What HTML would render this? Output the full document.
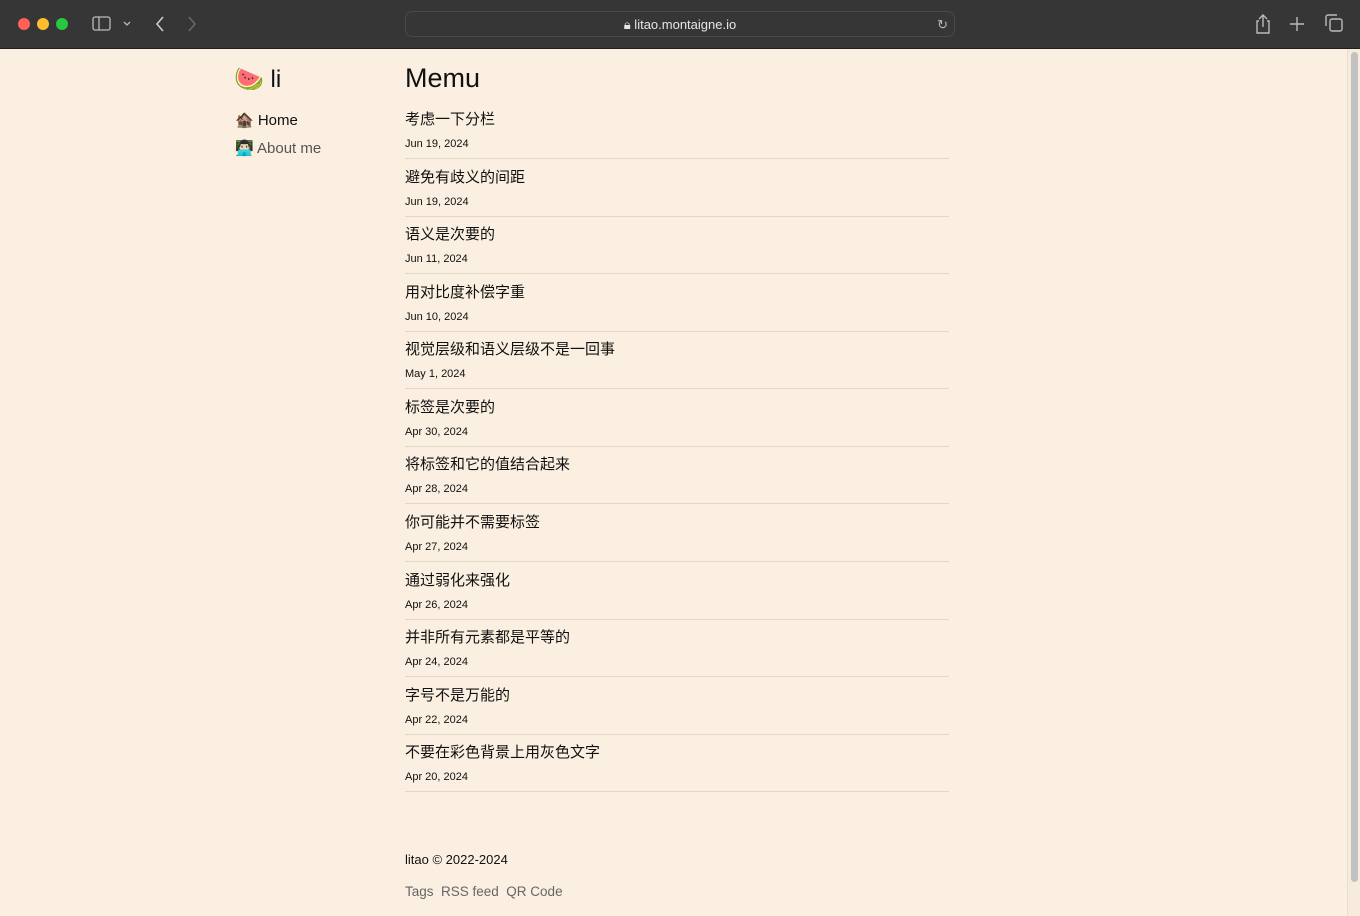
<!DOCTYPE html>
<html><head><meta charset="utf-8"><style>
*{margin:0;padding:0;box-sizing:border-box}
body{width:1360px;height:916px;overflow:hidden;background:#faefe0;font-family:"Liberation Sans","Noto Sans CJK SC",sans-serif;color:#111;position:relative}
.bar{position:absolute;left:0;top:0;width:1360px;height:49px;background:#353635;border-bottom:1px solid #1e1e1e}
.dot{position:absolute;top:18px;width:12px;height:12px;border-radius:50%}
.url{position:absolute;left:405px;top:11px;width:550px;height:26px;border:1px solid #4a4a4a;border-radius:7px;background:#353635;color:#e6e6e6;font-size:13px;text-align:center;line-height:25px}
.scroll{position:absolute;left:1347px;top:49px;width:13px;height:867px;background:#f6ebdc;border-left:1px solid #e8ddce}
.thumb{position:absolute;left:3px;top:3px;width:7px;height:830px;border-radius:4px;background:#c1c1c1}
.logo{position:absolute;left:234px;top:65px;font-size:24px}
.nav{position:absolute;left:235px;font-size:15px}
h1{position:absolute;left:405px;top:63px;font-size:27px;font-weight:normal}
.item{position:absolute;left:405px;width:544px;height:58px;border-bottom:1px solid #e2d8ca}
.t{position:absolute;top:7px;font-size:15px}
.d{position:absolute;top:37px;font-size:11px}
.foot{position:absolute;left:405px;font-size:13px}
</style></head><body>
<div class="bar">
<div class="dot" style="left:18px;background:#fe5f57"></div>
<div class="dot" style="left:37px;background:#febc2e"></div>
<div class="dot" style="left:56px;background:#28c840"></div>
<svg style="position:absolute;left:92px;top:16px" width="44" height="16" fill="none" stroke="#bbb" stroke-width="1.3"><rect x="1" y="1" width="17" height="13" rx="2"/><line x1="7" y1="1" x2="7" y2="14"/><path d="M32 6l3 3 3-3"/></svg>
<svg style="position:absolute;left:153px;top:15px" width="45" height="18" fill="none" stroke-width="1.6"><path d="M10 2l-6 7 6 7" stroke="#ccc"/><path d="M36 2l6 7-6 7" stroke="#666"/></svg>
<div class="url">🔒&#xFE0E; litao.montaigne.io<span style="position:absolute;right:6px;top:0;color:#bbb">↻</span></div>
<svg style="position:absolute;left:1254px;top:13px" width="90" height="22" fill="none" stroke="#bbb" stroke-width="1.4"><path d="M5 8H3v12h12V8h-2M9 14V2M5 6l4-4 4 4"/><path d="M43 4v14M36 11h14"/><rect x="76" y="6" width="12" height="12" rx="2"/><path d="M72 13V4a2 2 0 0 1 2-2h9"/></svg>
</div>
<div class="scroll"><div class="thumb"></div></div>
<div class="logo">🍉 li</div>
<div class="nav" style="top:111px">🏚️ Home</div>
<div class="nav" style="top:139px;color:#555">👨🏻‍💻 About me</div>
<h1>Memu</h1>
<div class="item" style="top:101px"><div class="t">考虑一下分栏</div><div class="d">Jun 19, 2024</div></div>
<div class="item" style="top:159px"><div class="t">避免有歧义的间距</div><div class="d">Jun 19, 2024</div></div>
<div class="item" style="top:216px"><div class="t">语义是次要的</div><div class="d">Jun 11, 2024</div></div>
<div class="item" style="top:274px"><div class="t">用对比度补偿字重</div><div class="d">Jun 10, 2024</div></div>
<div class="item" style="top:331px"><div class="t">视觉层级和语义层级不是一回事</div><div class="d">May 1, 2024</div></div>
<div class="item" style="top:389px"><div class="t">标签是次要的</div><div class="d">Apr 30, 2024</div></div>
<div class="item" style="top:446px"><div class="t">将标签和它的值结合起来</div><div class="d">Apr 28, 2024</div></div>
<div class="item" style="top:504px"><div class="t">你可能并不需要标签</div><div class="d">Apr 27, 2024</div></div>
<div class="item" style="top:562px"><div class="t">通过弱化来强化</div><div class="d">Apr 26, 2024</div></div>
<div class="item" style="top:619px"><div class="t">并非所有元素都是平等的</div><div class="d">Apr 24, 2024</div></div>
<div class="item" style="top:677px"><div class="t">字号不是万能的</div><div class="d">Apr 22, 2024</div></div>
<div class="item" style="top:734px"><div class="t">不要在彩色背景上用灰色文字</div><div class="d">Apr 20, 2024</div></div>
<div class="foot" style="top:852px">litao © 2022-2024</div>
<div class="foot" style="top:884px;color:#666;font-size:13.5px">Tags&nbsp; RSS feed&nbsp; QR Code</div>
</body></html>
